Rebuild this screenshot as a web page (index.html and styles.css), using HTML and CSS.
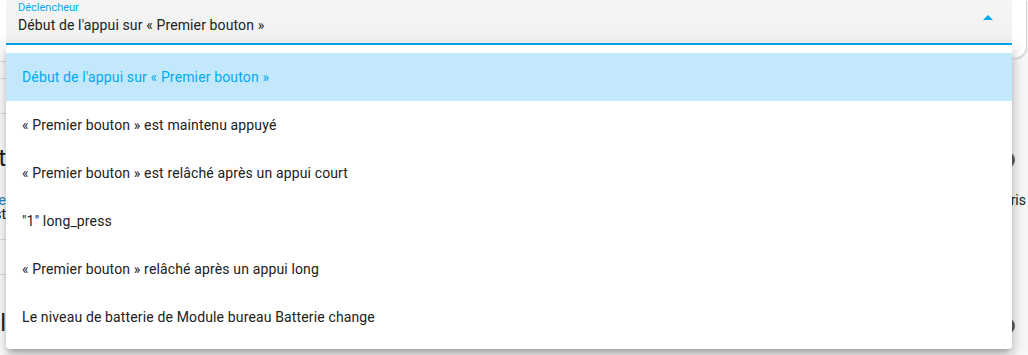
FILE: index.html
```html
<!DOCTYPE html>
<html>
<head>
    <meta http-equiv="Content-Type" content="text/html; charset=utf-8" />
    <title>Déclencheur</title>
    <link rel="stylesheet" href="styles.css">
</head>
<body>
    <div class="page">
        <div class="gutter gutter-left">
            <div class="rule rule-1"></div>
            <div class="rule rule-2"></div>
            <div class="rule rule-3"></div>
            <div class="clip heading">t</div>
            <div class="clip body-text link">e</div>
            <div class="clip body-text">st</div>
            <div class="rule rule-4"></div>
            <div class="rule rule-5"></div>
            <div class="clip heading small">Al</div>
        </div>

        <div class="editor">
            <div class="select">
                <span class="select-label">Déclencheur</span>
                <span class="select-value">Début de l'appui sur « Premier bouton »</span>
                <svg class="select-arrow" width="10" height="5" viewBox="0 0 10 5">
                    <path d="M0 5 L5 0 L10 5 Z" fill="#03a9f4" />
                </svg>
            </div>
            <ul class="menu">
                <li class="menu-item selected">Début de l'appui sur « Premier bouton »</li>
                <li class="menu-item">« Premier bouton » est maintenu appuyé</li>
                <li class="menu-item">« Premier bouton » est relâché après un appui court</li>
                <li class="menu-item">"1" long_press</li>
                <li class="menu-item">« Premier bouton » relâché après un appui long</li>
                <li class="menu-item">Le niveau de batterie de Module bureau Batterie change</li>
            </ul>
        </div>

        <div class="gutter gutter-right">
            <div class="card-corner"></div>
            <span class="dot dot-1"></span>
            <div class="side-text">ris</div>
            <span class="dot dot-2"></span>
        </div>
    </div>
</body>
</html>
```

FILE: styles.css
```css
* {
    margin: 0;
    padding: 0;
    box-sizing: border-box;
}

html, body {
    width: 100%;
    height: 100%;
    overflow: hidden;
}

body {
    font-family: Roboto, "Noto Sans", sans-serif;
    background: #fff;
    color: #212121;
}

.page {
    display: grid;
    grid-template-columns: 6px 1006px 16px;
    height: 355px;
}

/* page content peeking out on both sides of the menu */

.gutter {
    display: flex;
    flex-direction: column;
    overflow: hidden;
}

.gutter-left {
    background: #fff;
}

.rule {
    height: 1px;
    background: #e0e0e0;
}

.rule-1 {
    margin-top: 61px;
}

.rule-2 {
    margin-top: 16px;
}

.rule-3 {
    margin-top: 34px;
}

.rule-4 {
    margin-top: 18px;
}

.rule-5 {
    margin-top: 34px;
}

.clip {
    display: flex;
    justify-content: flex-end;
    white-space: nowrap;
}

.heading {
    margin-top: 32px;
    height: 24px;
    line-height: 24px;
    font-size: 24px;
    color: #212121;
}

.heading.small {
    margin-top: 36px;
}

.body-text {
    height: 14px;
    line-height: 14px;
    font-size: 14px;
}

.gutter-left .body-text.link {
    margin-top: 23px;
    color: #1e88c8;
}

.gutter-right {
    position: relative;
    background: #f7f7f7;
}

.card-corner {
    height: 58px;
    background: #fff;
    border-bottom-right-radius: 12px;
    box-shadow: 1px 1px 2px rgba(0, 0, 0, 0.18);
    margin-right: 2px;
}

.dot {
    display: block;
    width: 16px;
    height: 16px;
    border-radius: 50%;
    background: #616161;
    margin-left: -13px;
}

.dot-1 {
    margin-top: 94px;
}

.dot-2 {
    margin-top: 110px;
}

.side-text {
    display: flex;
    justify-content: flex-end;
    margin-top: 24px;
    padding-right: 2px;
    font-size: 14px;
    line-height: 16px;
    white-space: nowrap;
}

/* select field */

.editor {
    position: relative;
}

.select {
    position: relative;
    height: 45px;
    background: linear-gradient(#f5f5f5, #f1f1f1);
    border-bottom: 2px solid #03a9f4;
    padding: 2px 12px 0 12px;
}

.select-label {
    display: block;
    font-size: 11px;
    line-height: 12px;
    color: #03a9f4;
}

.select-value {
    display: block;
    margin-top: 2px;
    font-size: 14px;
    line-height: 18px;
    letter-spacing: 0.12px;
    color: #212121;
}

.select-arrow {
    position: absolute;
    right: 19px;
    top: 15px;
}

/* dropdown menu */

.menu {
    position: absolute;
    top: 45px;
    left: 0;
    right: 0;
    z-index: 10;
    list-style: none;
    padding: 8px 0;
    background: #fff;
    border-radius: 0 0 4px 4px;
    box-shadow: 0 5px 5px -3px rgba(0, 0, 0, 0.2), 0 8px 10px 1px rgba(0, 0, 0, 0.14), 0 3px 14px 2px rgba(0, 0, 0, 0.12);
}

.menu-item {
    height: 48px;
    line-height: 48px;
    padding: 0 16px;
    font-size: 14px;
    letter-spacing: 0.14px;
    color: #212121;
    white-space: nowrap;
}

.menu-item.selected {
    background: #c3e8fb;
    color: #03a9f4;
}
```
